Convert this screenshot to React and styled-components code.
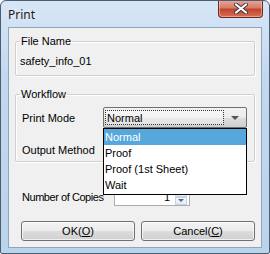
import React from 'react';
import styled, { createGlobalStyle } from 'styled-components';

const GlobalStyle = createGlobalStyle`
  html, body {
    margin: 0;
    padding: 0;
    background: #ffffff;
  }
  body {
    font-family: 'Liberation Sans', Arial, sans-serif;
    font-size: 11px;
    color: #000;
  }
`;

const Window = styled.div`
  width: 270px;
  height: 254px;
  box-sizing: border-box;
  border: 1px solid #4b5d73;
  border-radius: 6px 6px 2px 2px;
  background: linear-gradient(180deg, #d7e6f6 0%, #c3d8ef 30%, #bcd3ec 100%);
  display: flex;
  flex-direction: column;
  overflow: hidden;
`;

const TitleBar = styled.div`
  height: 26px;
  display: flex;
  align-items: flex-start;
  justify-content: space-between;
  padding: 0 6px 0 7px;
`;

const Title = styled.span`
  font-family: 'Noto Sans', 'Open Sans', sans-serif;
  font-size: 12px;
  line-height: 12px;
  margin-top: 8px;
  color: #1b1b1b;
  text-shadow: 0 0 6px rgba(255, 255, 255, 0.9);
`;

const CloseButton = styled.div`
  width: 45px;
  height: 18px;
  margin-top: -1px;
  box-sizing: border-box;
  border: 1px solid #6a2a22;
  border-top: none;
  border-radius: 0 0 4px 4px;
  background: linear-gradient(180deg, #e9a99a 0%, #d77b68 45%, #c2432d 55%, #d66f58 100%);
  box-shadow: inset 0 0 0 1px rgba(255, 220, 210, 0.45);
  display: flex;
  align-items: center;
  justify-content: center;
`;

const Client = styled.div`
  flex: 1;
  margin: 0 7px 5px 7px;
  background: #f0f0f0;
  border: 1px solid #8fa5bf;
  display: flex;
  flex-direction: column;
  padding: 7px 6px 0 6px;
`;

const Group = styled.fieldset`
  margin: 0 0 ${({ gap }) => gap || 0}px 0;
  padding: ${({ pad }) => pad};
  border: 1px solid #d0d0d0;
  border-radius: 2px;
  box-shadow: inset 1px 1px 0 #ffffff, 1px 1px 0 #ffffff;
  min-width: 0;
`;

const Legend = styled.legend`
  padding: 0 1px;
  margin-left: 0;
  line-height: 13px;
`;

const Value = styled.div`
  line-height: 13px;
`;

const Row = styled.div`
  display: flex;
  align-items: center;
  height: ${({ h }) => h || 21}px;
  margin-top: ${({ mt }) => mt || 0}px;
  padding-left: ${({ pl }) => pl || 0}px;
`;

const Label = styled.span`
  width: ${({ w }) => w}px;
  flex: none;
  letter-spacing: ${({ tight }) => (tight ? '-0.45px' : 'normal')};
`;

const ComboWrap = styled.div`
  position: relative;
  width: 144px;
  height: 21px;
`;

const Combo = styled.div`
  box-sizing: border-box;
  height: 100%;
  border: 1px solid #707070;
  border-radius: 2px;
  background: linear-gradient(180deg, #f2f2f2 0%, #ebebeb 50%, #dddddd 51%, #cfcfcf 100%);
  display: flex;
  align-items: stretch;
  padding: 2px 0 2px 1px;
`;

const ComboText = styled.div`
  flex: 1;
  border: 1px dotted #333;
  display: flex;
  align-items: center;
  padding-left: 1px;
  background: rgba(255, 255, 255, 0.35);
`;

const ComboArrow = styled.div`
  width: 22px;
  display: flex;
  align-items: center;
  justify-content: center;
`;

const List = styled.ul`
  position: absolute;
  top: 100%;
  left: 0;
  right: 0;
  margin: 0;
  padding: 0 0 1px 0;
  list-style: none;
  background: #ffffff;
  border: 1px solid #000;
  z-index: 5;
`;

const Item = styled.li`
  height: 16px;
  line-height: 16px;
  padding-left: 1px;
  background: ${({ active }) => (active ? '#56a8dc' : 'transparent')};
  color: ${({ active }) => (active ? '#ffffff' : '#000')};
`;

const Spin = styled.div`
  width: 76px;
  height: 19px;
  box-sizing: border-box;
  border: 1px solid #abadb3;
  background: #fff;
  display: flex;
  align-items: center;
`;

const SpinValue = styled.div`
  flex: 1;
  text-align: right;
  padding-right: 5px;
`;

const SpinButtons = styled.div`
  width: 12px;
  height: 100%;
  margin-right: 2px;
  display: flex;
  flex-direction: column;
`;

const SpinHalf = styled.div`
  flex: 1;
  border: 1px solid #c9d4e2;
  background: linear-gradient(180deg, #f7f9fc, #e4ebf3);
  display: flex;
  align-items: center;
  justify-content: center;
`;

const Buttons = styled.div`
  display: flex;
  gap: 6px;
  margin-top: 15px;
  padding-left: 6px;
`;

const Button = styled.button`
  width: 115px;
  height: 20px;
  font: inherit;
  color: #000;
  border: 1px solid #707070;
  border-radius: 3px;
  background: linear-gradient(180deg, #f2f2f2 0%, #ebebeb 50%, #dddddd 51%, #cfcfcf 100%);
  box-shadow: inset 0 0 0 1px rgba(255, 255, 255, 0.7);
  padding: 0;
`;

const Arrow = ({ color = '#444', w = 8, h = 4 }) => (
  <svg width={w} height={h} viewBox="0 0 8 4">
    <path d="M0 0 H8 L4 4 Z" fill={color} />
  </svg>
);

export default function App() {
  return (
    <>
      <GlobalStyle />
      <Window>
        <TitleBar>
          <Title>Print</Title>
          <CloseButton>
            <svg width="14" height="11" viewBox="0 0 14 11">
              <path d="M2 1.5 L12 9.5 M12 1.5 L2 9.5" stroke="#3a3a3a" strokeWidth="4" strokeLinecap="round" />
              <path d="M2 1.5 L12 9.5 M12 1.5 L2 9.5" stroke="#ffffff" strokeWidth="2.2" strokeLinecap="round" />
            </svg>
          </CloseButton>
        </TitleBar>
        <Client>
          <Group pad="7px 4px 7px 4px" gap={12}>
            <Legend>File Name</Legend>
            <Value>safety_info_01</Value>
          </Group>
          <Group pad="6px 7px 1px 4px">
            <Legend>Workflow</Legend>
            <Row pl={2}>
              <Label w={81}>Print Mode</Label>
              <ComboWrap>
                <Combo>
                  <ComboText>Normal</ComboText>
                  <ComboArrow>
                    <Arrow color="#555" />
                  </ComboArrow>
                </Combo>
                <List>
                  <Item active>Normal</Item>
                  <Item>Proof</Item>
                  <Item>Proof (1st Sheet)</Item>
                  <Item>Wait</Item>
                </List>
              </ComboWrap>
            </Row>
            <Row mt={11} pl={2}>
              <Label w={81}>Output Method</Label>
              <ComboWrap>
                <Combo>
                  <ComboText />
                  <ComboArrow>
                    <Arrow color="#555" />
                  </ComboArrow>
                </Combo>
              </ComboWrap>
            </Row>
          </Group>
          <Row mt={25} h={19} pl={7}>
            <Label w={92} tight>Number of Copies</Label>
            <Spin>
              <SpinValue>1</SpinValue>
              <SpinButtons>
                <SpinHalf>
                  <svg width="6" height="3" viewBox="0 0 6 3"><path d="M0 3 H6 L3 0 Z" fill="#4a6a9a" /></svg>
                </SpinHalf>
                <SpinHalf>
                  <Arrow color="#4a6a9a" w={6} h={3} />
                </SpinHalf>
              </SpinButtons>
            </Spin>
          </Row>
          <Buttons>
            <Button>OK(<u>O</u>)</Button>
            <Button>Cancel(<u>C</u>)</Button>
          </Buttons>
        </Client>
      </Window>
    </>
  );
}
